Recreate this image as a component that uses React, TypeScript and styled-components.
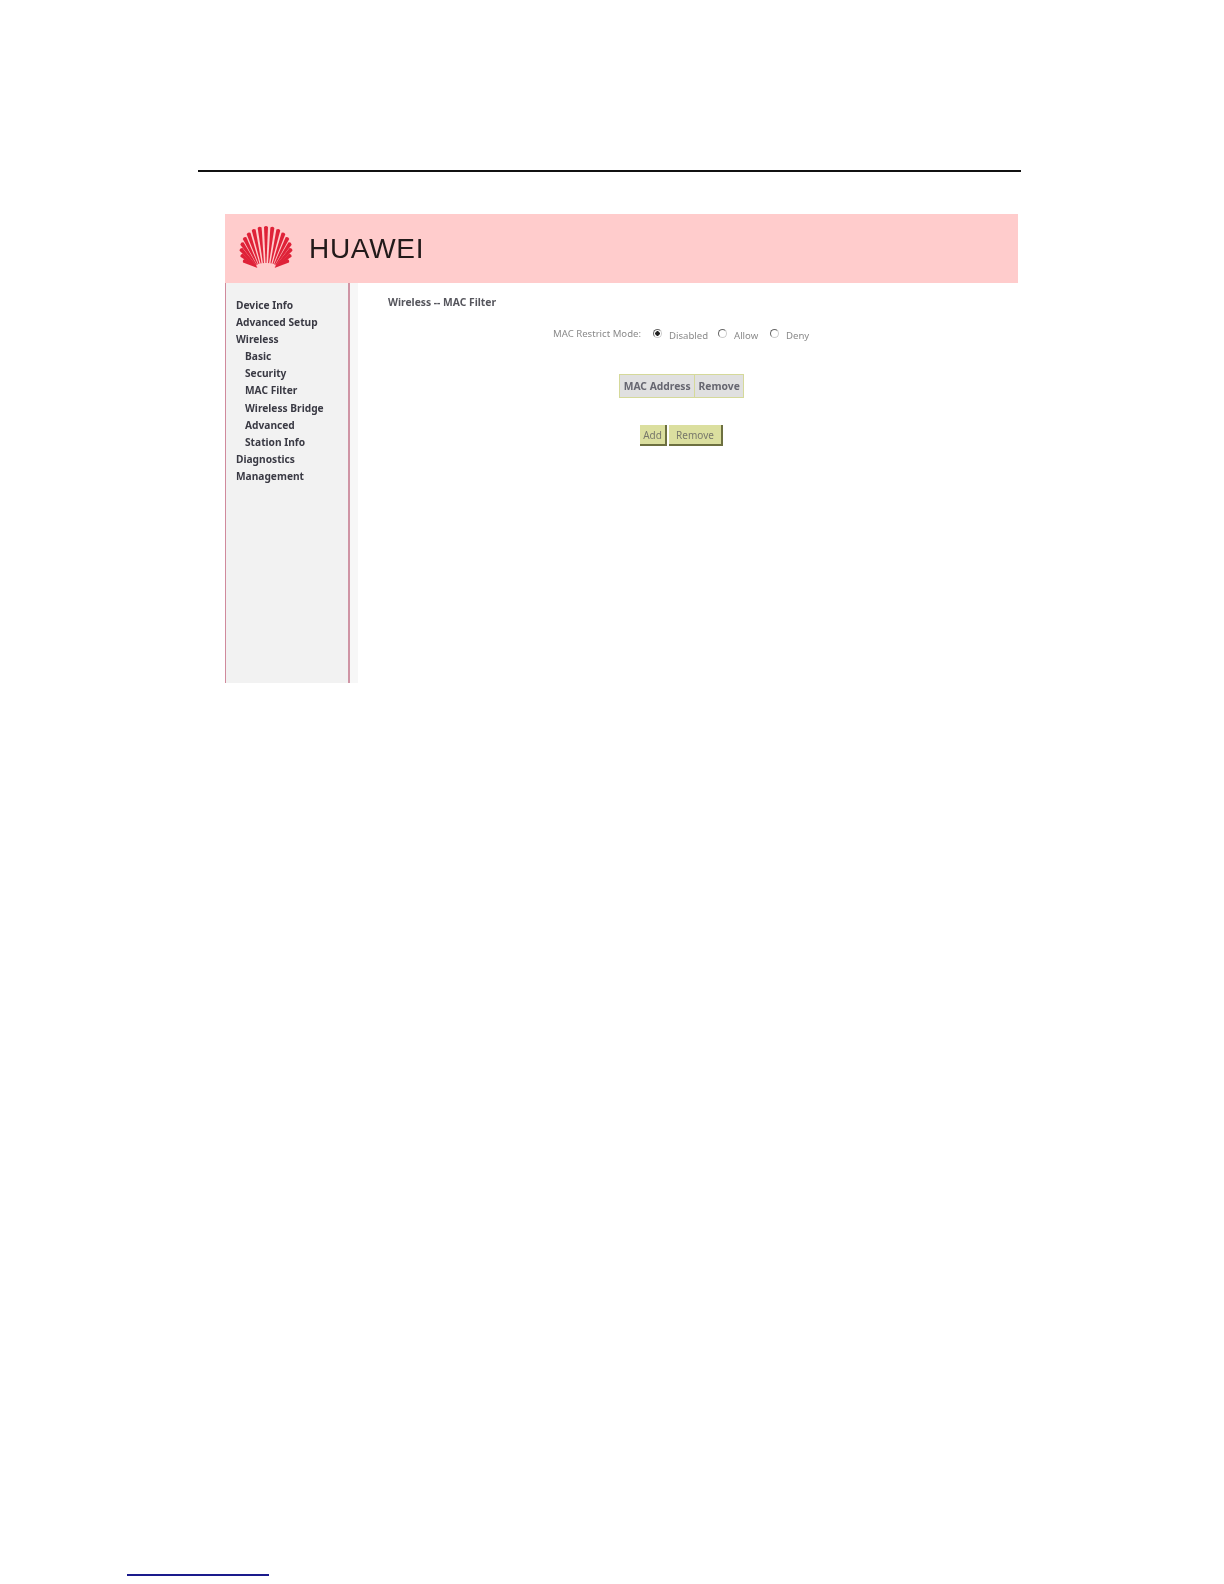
import React from 'react';
import styled, { createGlobalStyle } from 'styled-components';

const GlobalStyle = createGlobalStyle`
  html, body {
    margin: 0;
    padding: 0;
    background: #fff;
  }
`;

const Page = styled.div`
  width: 1224px;
  height: 1584px;
  box-sizing: border-box;
  padding: 170px 0 0 198px;
  display: flex;
  flex-direction: column;
  overflow: hidden;
`;

const TopRule = styled.div`
  width: 823px;
  height: 2px;
  background: #111;
`;

const Shot = styled.div`
  width: 793px;
  height: 469px;
  margin: 42px 0 0 27px;
  display: flex;
  flex-direction: column;
  filter: blur(0.55px);
`;

const Banner = styled.div`
  height: 69px;
  background: #ffcccc;
  display: flex;
  align-items: center;
  gap: 16px;
  padding-left: 14px;
`;

const BrandName = styled.span`
  font-family: "Liberation Sans", Arial, sans-serif;
  font-size: 28px;
  color: #221a1a;
  letter-spacing: 0.7px;
`;

const Body = styled.div`
  flex: 1;
  display: flex;
`;

const Sidebar = styled.nav`
  width: 122px;
  background: #f2f2f2;
  border-left: 1px solid #d08a9c;
  border-right: 2px solid #cf95a5;
  padding-top: 14px;
  display: flex;
  flex-direction: column;
`;

const NavItem = styled.div<{ $sub?: boolean }>`
  height: 17.1px;
  line-height: 17px;
  padding-left: ${p => (p.$sub ? 19 : 10)}px;
  font-family: "Noto Sans", "DejaVu Sans", sans-serif;
  font-size: 10.2px;
  font-weight: 700;
  color: #3a3a44;
  white-space: nowrap;
`;

const Strip = styled.div`
  width: 8px;
  background: #f7f7f7;
`;

const Content = styled.main`
  flex: 1;
  display: flex;
  flex-direction: column;
  font-family: "Noto Sans", "DejaVu Sans", sans-serif;
  font-size: 10.3px;
  color: #555;
`;

const Title = styled.div`
  margin: 12px 0 0 30px;
  font-weight: 700;
  color: #55555c;
  line-height: 14px;
`;

const ModeRow = styled.div`
  margin: 19px 0 0 195px;
  display: flex;
  align-items: center;
  height: 14px;
  font-size: 9.6px;
  color: #8a8a8a;
`;

const ModeLabel = styled.span`
  width: 98px;
  margin-top: -3px;
`;

const RadioOption = styled.span<{ $width: number }>`
  width: ${p => p.$width}px;
  display: flex;
  align-items: center;
  gap: 7px;
`;

const Radio = styled.span<{ $on?: boolean }>`
  width: 9px;
  height: 9px;
  box-sizing: border-box;
  border-radius: 50%;
  border: 1px solid #666;
  border-right-color: #ccc;
  border-bottom-color: #ccc;
  background: ${p => (p.$on ? 'radial-gradient(circle, #222 0 2px, #fff 2.5px)' : '#fff')};
  flex: none;
  margin-top: -4px;
  margin-left: 2px;
`;

const TableWrap = styled.div`
  margin: 32px 0 0 261px;
  width: 125px;
  height: 24px;
  display: flex;
  border: 1px solid #d5d99a;
  box-sizing: border-box;
`;

const HeadCell = styled.div<{ $width: number }>`
  width: ${p => p.$width}px;
  background: #e0e0e0;
  display: flex;
  align-items: center;
  justify-content: center;
  font-weight: 700;
  color: #666670;
  & + & {
    border-left: 1px solid #d5d99a;
  }
`;

const ButtonRow = styled.div`
  margin: 27px 0 0 282px;
  display: flex;
  gap: 2px;
`;

const FormButton = styled.button<{ $width: number }>`
  width: ${p => p.$width}px;
  height: 21px;
  padding: 0;
  background: #dbdf9f;
  border: none;
  border-right: 2px solid #6d7040;
  border-bottom: 2px solid #6d7040;
  font-family: "Noto Sans", "DejaVu Sans", sans-serif;
  font-size: 10px;
  color: #77776a;
`;

const FootRule = styled.div`
  position: absolute;
  left: 127px;
  top: 1574px;
  width: 142px;
  height: 1.5px;
  background: #1a1a8c;
`;

// scallop logo: tapered petals fanned on an ellipse
const Shell = () => {
  const rays = Array.from({ length: 17 }, (_, i) => ((-118 + (i * 236) / 16) * Math.PI) / 180);
  const ray = (t: number) => {
    const sx = Math.sin(t);
    const cx = Math.cos(t);
    const ox = 27 + 25 * sx;
    const oy = 24 - 23 * cx;
    const ix = 27 + 10 * sx;
    const iy = 40 - 3 * cx;
    const dx = ox - ix;
    const dy = oy - iy;
    const len = Math.hypot(dx, dy);
    const nx = -dy / len;
    const ny = dx / len;
    const w = 2;
    return [
      `M${(ix + nx * 0.5).toFixed(2)} ${(iy + ny * 0.5).toFixed(2)}`,
      `L${(ox + nx * w).toFixed(2)} ${(oy + ny * w).toFixed(2)}`,
      `Q${(ox + (dx / len) * 2).toFixed(2)} ${(oy + (dy / len) * 2).toFixed(2)}`,
      `${(ox - nx * w).toFixed(2)} ${(oy - ny * w).toFixed(2)}`,
      `L${(ix - nx * 0.5).toFixed(2)} ${(iy - ny * 0.5).toFixed(2)} Z`,
    ].join(' ');
  };
  return (
    <svg width="54" height="46" viewBox="0 0 54 46">
      {rays.map(t => (
        <path key={t} d={ray(t)} fill="#df2238" />
      ))}
    </svg>
  );
};

export default function App() {
  return (
    <>
      <GlobalStyle />
      <Page>
        <TopRule />
        <Shot>
          <Banner>
            <Shell />
            <BrandName>HUAWEI</BrandName>
          </Banner>
          <Body>
            <Sidebar>
              <NavItem>Device Info</NavItem>
              <NavItem>Advanced Setup</NavItem>
              <NavItem>Wireless</NavItem>
              <NavItem $sub>Basic</NavItem>
              <NavItem $sub>Security</NavItem>
              <NavItem $sub>MAC Filter</NavItem>
              <NavItem $sub>Wireless Bridge</NavItem>
              <NavItem $sub>Advanced</NavItem>
              <NavItem $sub>Station Info</NavItem>
              <NavItem>Diagnostics</NavItem>
              <NavItem>Management</NavItem>
            </Sidebar>
            <Strip />
            <Content>
              <Title>Wireless -- MAC Filter</Title>
              <ModeRow>
                <ModeLabel>MAC Restrict Mode:</ModeLabel>
                <RadioOption $width={65}><Radio $on />Disabled</RadioOption>
                <RadioOption $width={52}><Radio />Allow</RadioOption>
                <RadioOption $width={50}><Radio />Deny</RadioOption>
              </ModeRow>
              <TableWrap>
                <HeadCell $width={75}>MAC Address</HeadCell>
                <HeadCell $width={48}>Remove</HeadCell>
              </TableWrap>
              <ButtonRow>
                <FormButton $width={27}>Add</FormButton>
                <FormButton $width={54}>Remove</FormButton>
              </ButtonRow>
            </Content>
          </Body>
        </Shot>
        <FootRule />
      </Page>
    </>
  );
}
